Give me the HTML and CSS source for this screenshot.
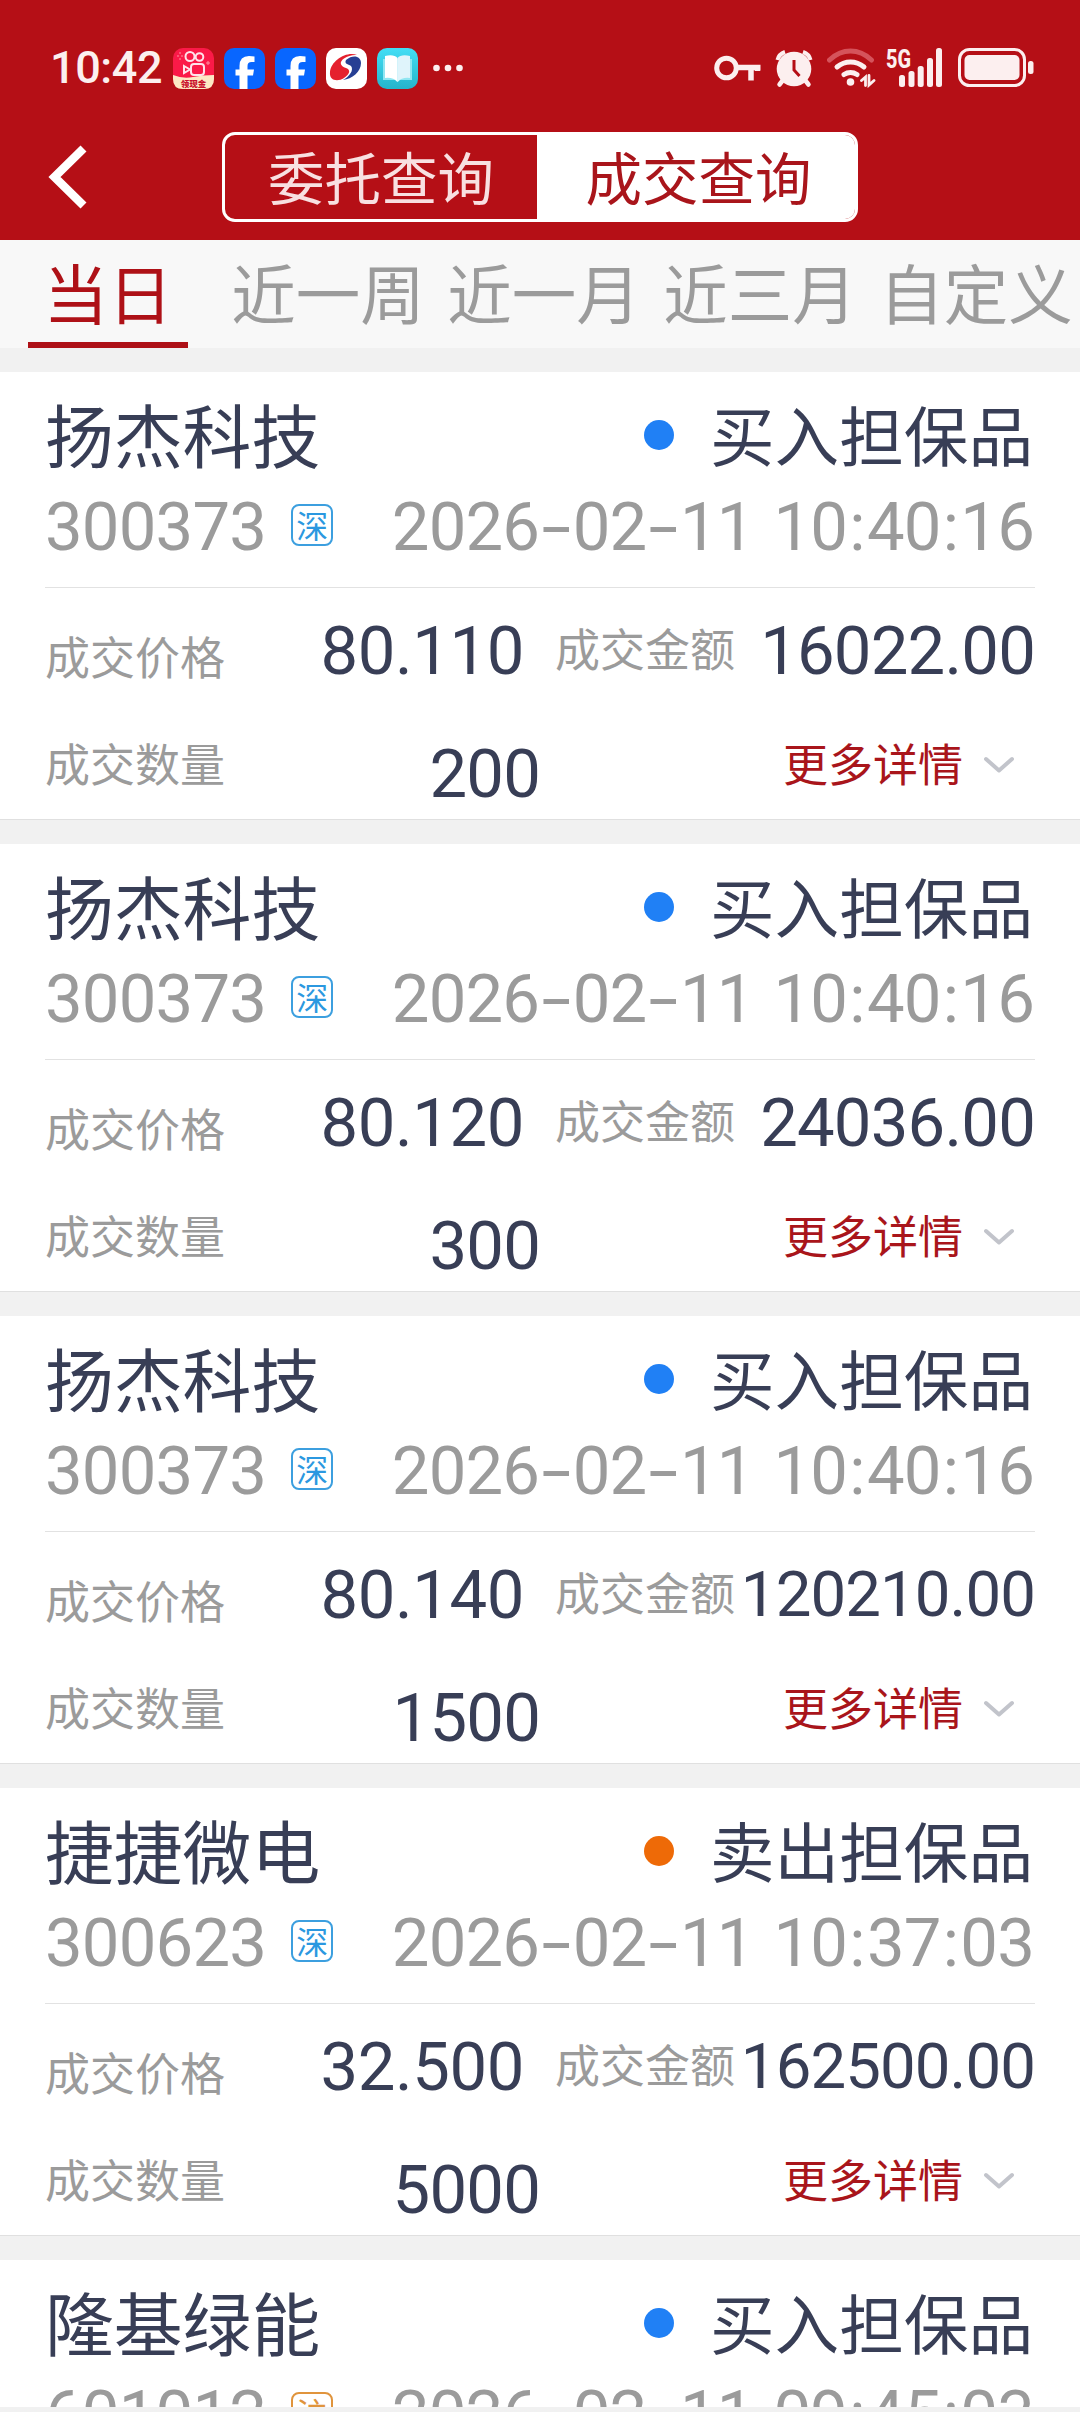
FILE: index.html
```html
<!DOCTYPE html>
<html lang="zh-CN">
<head>
    <meta charset="utf-8">
    <title>成交查询</title>
    <link rel="stylesheet" href="styles.css">
</head>
<body>
    <header class="header">
        <div class="status">
            <span class="clock">10:42</span>
            <div class="apps">
                <svg width="41" height="41" viewBox="0 0 41 41">
                    <rect width="41" height="41" rx="10" fill="#fb1a48"/>
                    <path d="M0 27Q10 31 20 29T41 27V31Q41 41 31 41H10Q0 41 0 31Z" fill="#fde9c4"/>
                    <g fill="none" stroke="#ffe3ea" stroke-width="2">
                        <circle cx="17" cy="8.500" r="4.500"/>
                        <circle cx="26.500" cy="9" r="3.800"/>
                        <rect x="18" y="16" width="13" height="11" rx="3"/>
                        <path d="M11 18L17 21.500L11 25Z"/>
                    </g>
                    <path d="M4 8h2M8 8h2M7 4v2M7 10v2M35 13v4M33 15h4" stroke="#ff8fa0" stroke-width="1"/>
                    <text x="20.500" y="38.500" class="app-tag">领现金</text>
                </svg>
                <svg width="41" height="41" viewBox="0 0 41 41">
                    <rect width="41" height="41" rx="10" fill="#0866ff"/>
                    <path d="M15.500 41V27.500H11.500V21.500H15.500V18Q15.500 8 25 8Q28 8 30.500 8.500V14H27.500Q23.500 14 23.500 18V21.500H30L29 27.500H23.500V41Z" fill="#fff"/>
                </svg>
                <svg width="41" height="41" viewBox="0 0 41 41">
                    <rect width="41" height="41" rx="10" fill="#0866ff"/>
                    <path d="M15.500 41V27.500H11.500V21.500H15.500V18Q15.500 8 25 8Q28 8 30.500 8.500V14H27.500Q23.500 14 23.500 18V21.500H30L29 27.500H23.500V41Z" fill="#fff"/>
                </svg>
                <svg width="41" height="41" viewBox="0 0 41 41">
                    <rect width="41" height="41" rx="10" fill="#fff"/>
                    <path d="M31 7C20 3 5 13 4 24C3 33 12 34 18 30C24 26 25 22 20 20C14 18 13 14 18 10.500C22 8 26 6.500 31 7Z" fill="#e5202e"/>
                    <path d="M20 12C27 6 35 8 35 15C35 24 26 31 17 32C24 28 28 22 25 18C22 16 18 16 20 12Z" fill="#273f94"/>
                </svg>
                <svg width="41" height="41" viewBox="0 0 41 41">
                    <defs>
                        <linearGradient id="teal" x1="0" y1="0" x2="0" y2="1">
                            <stop offset="0" stop-color="#43def5"/>
                            <stop offset="1" stop-color="#25b4cb"/>
                        </linearGradient>
                    </defs>
                    <rect width="41" height="41" rx="10" fill="url(#teal)"/>
                    <path d="M6 11H35V32H23L20.500 34L18 32H6Z" fill="#8fe6f2"/>
                    <path d="M8 8Q17 6 20.500 10V34Q16 29 8 30Z" fill="#fff"/>
                    <path d="M33 8Q24 6 20.500 10V34Q25 29 33 30Z" fill="#dff4fb"/>
                </svg>
            </div>
            <svg class="dots" width="30" height="8" viewBox="0 0 30 8" fill="#fcefef">
                <circle cx="3.500" cy="4" r="3.300"/>
                <circle cx="15" cy="4" r="3.300"/>
                <circle cx="26.500" cy="4" r="3.300"/>
            </svg>
            <div class="signals">
                <svg width="47" height="42" viewBox="0 0 47 42" fill="none" stroke="#fcefef">
                    <circle cx="12.500" cy="22" r="9.800" stroke-width="5"/>
                    <path d="M23 21.500H46.500M37 22V34.500M43.500 22V25" stroke-width="5.500"/>
                </svg>
                <svg class="alarm" width="38" height="42" viewBox="0 0 38 42">
                    <circle cx="19" cy="23" r="17.300" fill="#fcefef"/>
                    <path d="M2.500 14Q4 8 10 6M35.500 14Q34 8 28 6" fill="none" stroke="#fcefef" stroke-width="4"/>
                    <path d="M8 34L4.500 38.500M30 34L33.500 38.500" stroke="#fcefef" stroke-width="4.500" stroke-linecap="round"/>
                    <path d="M19 14V24L24.500 30" fill="none" stroke="#b50f16" stroke-width="3"/>
                </svg>
                <svg class="wifi" width="49" height="42" viewBox="0 0 49 42" fill="none" stroke="#fcefef" stroke-width="5" stroke-linecap="round">
                    <path d="M2.500 14Q12 5 23.500 5T44.500 14" stroke="#d5535b"/>
                    <path d="M10 21Q16 16 23.500 16T37 21"/>
                    <path d="M17 28.500Q20 26.500 23.500 26.500T30 28.500"/>
                    <circle cx="23.500" cy="36" r="3.800" fill="#fcefef" stroke="none"/>
                    <path d="M34.500 34.500L38.500 31V39.500M42 29.500V39L47 34.500" stroke-width="2.800"/>
                </svg>
                <svg class="cell" width="56" height="54" viewBox="0 -12 56 54" fill="#fcefef">
                    <text x="0" y="21.500" class="net" textLength="25" lengthAdjust="spacingAndGlyphs">5G</text>
                    <rect x="13" y="29" width="6" height="12" rx="2.500"/>
                    <rect x="22.500" y="25" width="6" height="16" rx="2.500"/>
                    <rect x="31.700" y="20" width="6" height="21" rx="2.500"/>
                    <rect x="41" y="12" width="6" height="29" rx="2.500"/>
                    <rect x="50" y="2" width="6" height="39" rx="2.500"/>
                </svg>
                <svg class="battery" width="76" height="42" viewBox="0 0 76 42" fill="#fcefef">
                    <rect x="1.500" y="3.500" width="65" height="36" rx="10" fill="none" stroke="#fcefef" stroke-width="3"/>
                    <rect x="6.500" y="9" width="55" height="25" rx="5"/>
                    <rect x="70" y="15" width="5.500" height="13" rx="2.500"/>
                </svg>
            </div>
        </div>
        <div class="nav">
            <svg class="back" width="40" height="64" viewBox="0 0 40 64">
                <path d="M35.500 3.500L6.500 32L35.500 60.500" fill="none" stroke="#fff" stroke-width="8.500"/>
            </svg>
            <div class="switch">
                <div class="switch-item">委托查询</div>
                <div class="switch-item switch-on">成交查询</div>
            </div>
        </div>
    </header>

    <nav class="tabs">
        <div class="tab tab-on"><span>当日</span></div>
        <div class="tab">近一周</div>
        <div class="tab">近一月</div>
        <div class="tab">近三月</div>
        <div class="tab">自定义</div>
    </nav>

    <main class="list">
        <section class="card">
            <div class="row row-name">
                <span class="name">扬杰科技</span>
                <i class="dot"></i>
                <span class="side">买入担保品</span>
            </div>
            <div class="row row-code">
                <span class="num">300373</span>
                <span class="market">深</span>
                <span class="num time">2026<b>-</b>02<b>-</b>11 10<u>:</u>40<u>:</u>16</span>
            </div>
            <div class="row row-price">
                <span class="label">成交价格</span>
                <span class="num price">80.110</span>
                <span class="label label-amount">成交金额</span>
                <span class="num amount">16022.00</span>
            </div>
            <div class="row row-qty">
                <span class="label">成交数量</span>
                <span class="num qty">200</span>
                <span class="more">更多详情</span>
                <svg class="arrow" width="30" height="18" viewBox="0 0 30 18"><path d="M2 3L15 14.500L28 3"/></svg>
            </div>
        </section>

        <section class="card">
            <div class="row row-name">
                <span class="name">扬杰科技</span>
                <i class="dot"></i>
                <span class="side">买入担保品</span>
            </div>
            <div class="row row-code">
                <span class="num">300373</span>
                <span class="market">深</span>
                <span class="num time">2026<b>-</b>02<b>-</b>11 10<u>:</u>40<u>:</u>16</span>
            </div>
            <div class="row row-price">
                <span class="label">成交价格</span>
                <span class="num price">80.120</span>
                <span class="label label-amount">成交金额</span>
                <span class="num amount">24036.00</span>
            </div>
            <div class="row row-qty">
                <span class="label">成交数量</span>
                <span class="num qty">300</span>
                <span class="more">更多详情</span>
                <svg class="arrow" width="30" height="18" viewBox="0 0 30 18"><path d="M2 3L15 14.500L28 3"/></svg>
            </div>
        </section>

        <section class="card">
            <div class="row row-name">
                <span class="name">扬杰科技</span>
                <i class="dot"></i>
                <span class="side">买入担保品</span>
            </div>
            <div class="row row-code">
                <span class="num">300373</span>
                <span class="market">深</span>
                <span class="num time">2026<b>-</b>02<b>-</b>11 10<u>:</u>40<u>:</u>16</span>
            </div>
            <div class="row row-price">
                <span class="label">成交价格</span>
                <span class="num price">80.140</span>
                <span class="label label-amount">成交金额</span>
                <span class="num amount amount-long">120210.00</span>
            </div>
            <div class="row row-qty">
                <span class="label">成交数量</span>
                <span class="num qty">1500</span>
                <span class="more">更多详情</span>
                <svg class="arrow" width="30" height="18" viewBox="0 0 30 18"><path d="M2 3L15 14.500L28 3"/></svg>
            </div>
        </section>

        <section class="card">
            <div class="row row-name">
                <span class="name">捷捷微电</span>
                <i class="dot dot-sell"></i>
                <span class="side">卖出担保品</span>
            </div>
            <div class="row row-code">
                <span class="num">300623</span>
                <span class="market">深</span>
                <span class="num time">2026<b>-</b>02<b>-</b>11 10<u>:</u>37<u>:</u>03</span>
            </div>
            <div class="row row-price">
                <span class="label">成交价格</span>
                <span class="num price">32.500</span>
                <span class="label label-amount">成交金额</span>
                <span class="num amount amount-long">162500.00</span>
            </div>
            <div class="row row-qty">
                <span class="label">成交数量</span>
                <span class="num qty">5000</span>
                <span class="more">更多详情</span>
                <svg class="arrow" width="30" height="18" viewBox="0 0 30 18"><path d="M2 3L15 14.500L28 3"/></svg>
            </div>
        </section>

        <section class="card">
            <div class="row row-name">
                <span class="name">隆基绿能</span>
                <i class="dot"></i>
                <span class="side">买入担保品</span>
            </div>
            <div class="row row-code">
                <span class="num">601012</span>
                <span class="market market-sh">沪</span>
                <span class="num time">2026<b>-</b>02<b>-</b>11 09<u>:</u>45<u>:</u>03</span>
            </div>
        </section>
    </main>
</body>
</html>
```
FILE: styles.css
```css
body {
    margin: 0;
    width: 1080px;
    height: 2412px;
    display: flex;
    flex-direction: column;
    overflow: hidden;
    background: #f1f1f1;
    font-family: "Noto Sans CJK SC", sans-serif;
    color: #383e56;
}

/* header */
.header {
    height: 240px;
    background: #b50f16;
}

.status {
    height: 90px;
    display: flex;
    align-items: flex-end;
    padding-left: 50px;
    padding-right: 46px;
}

.clock {
    width: 123px;
    font: 500 45px/45px Roboto, sans-serif;
    letter-spacing: -0.4px;
    color: #fcefef;
}

.apps {
    display: flex;
    gap: 10px;
    padding-bottom: 1px;
}

.apps svg {
    display: block;
}

.app-tag {
    font: 900 8.5px "Noto Sans CJK SC", sans-serif;
    text-anchor: middle;
    fill: #c9102c;
}

.dots {
    margin-left: 15px;
    margin-bottom: 18px;
}

.signals {
    display: flex;
    align-items: flex-end;
    margin-left: auto;
    margin-bottom: 2px;
}

.alarm {
    margin-left: 14px;
}

.wifi {
    margin-left: 14px;
}

.cell {
    margin-left: 10px;
}

.net {
    font: 800 26px Roboto, sans-serif;
}

.battery {
    margin-left: 16px;
}

.nav {
    height: 90px;
    margin-top: 42px;
    display: flex;
    align-items: center;
    padding-left: 48px;
}

.switch {
    display: flex;
    box-sizing: border-box;
    width: 636px;
    height: 90px;
    margin-left: 134px;
    border: 3px solid #fff;
    border-radius: 13px;
    overflow: hidden;
}

.switch-item {
    width: 312px;
    text-align: center;
    font-size: 56.5px;
    line-height: 80px;
    color: #f8e0e1;
}

.switch-on {
    flex: 1;
    padding-left: 5px;
    background: #fff;
    color: #a9151b;
}

/* date range tabs */
.tabs {
    height: 108px;
    display: flex;
    background: #f8f8f8;
    margin-bottom: 24px;
}

.tab {
    width: 216px;
    padding-left: 8px;
    box-sizing: border-box;
    text-align: center;
    white-space: nowrap;
    font-size: 64.5px;
    line-height: 102px;
    color: #9b9b9b;
}

.tab-on {
    padding: 0 28px;
    color: #ae1117;
}

.tab-on span {
    display: block;
    border-bottom: 6px solid #ae1117;
}

/* deals */
.list {
    height: 2035px;
    overflow: hidden;
}

.card {
    box-sizing: border-box;
    height: 448px;
    margin-bottom: 24px;
    padding: 11px 45px 0;
    background: #fff;
    border-bottom: 1px solid #e0e0e0;
}

.row {
    display: flex;
    align-items: center;
    white-space: nowrap;
}

.row-name {
    height: 100px;
}

.name {
    font-size: 68.8px;
}

.dot {
    width: 30px;
    height: 30px;
    margin-left: auto;
    margin-top: 4px;
    border-radius: 50%;
    background: #2080f5;
}

.dot-sell {
    background: #ee6a07;
}

.side {
    margin-left: 36px;
    margin-right: 2px;
    font-size: 64.6px;
}

.num {
    font: 400 67px/80px Roboto, sans-serif;
    letter-spacing: -0.8px;
}

.row-code {
    height: 88px;
    padding-bottom: 16px;
    border-bottom: 1px solid #e2e2e2;
    color: #9b9b9b;
}

.market {
    box-sizing: border-box;
    width: 42px;
    height: 42px;
    margin-left: 25px;
    margin-bottom: 5px;
    border: 2px solid #3c9fdf;
    border-radius: 8px;
    text-align: center;
    font-size: 32px;
    line-height: 36px;
    color: #2b98e0;
}

.market-sh {
    border-color: #e0943c;
    color: #e0943c;
}

.time {
    margin-left: auto;
    margin-right: 1px;
    word-spacing: 4px;
}

.time b {
    display: inline-block;
    width: 33.5px;
    text-align: center;
    font-weight: 400;
    transform: scaleX(1.6);
}

.time u {
    display: inline-block;
    width: 19.7px;
    text-align: center;
    text-decoration: none;
}

.label {
    font-size: 45px;
    color: #9b9b9b;
}

.row-price {
    height: 126px;
}

.row-price .label {
    padding-top: 8px;
}

.price {
    margin-left: auto;
    padding-right: 1px;
    letter-spacing: -0.4px;
}

.row-price .label-amount {
    width: 180px;
    margin-left: 30px;
    padding: 0 0 8px;
}

.amount {
    width: 300px;
    text-align: right;
}

/* long sums are set smaller so that they still fit beside the label */
.amount-long {
    font-size: 63.5px;
    letter-spacing: -0.9px;
}

.row-qty {
    height: 105px;
}

.row-qty .label {
    width: 180px;
    padding-bottom: 8px;
}

.qty {
    width: 315px;
    padding-top: 15px;
    text-align: right;
}

.more {
    margin-left: 243px;
    padding-bottom: 8px;
    font-size: 45px;
    color: #a9151b;
}

.arrow {
    margin-left: 21px;
    margin-bottom: 4px;
    fill: none;
    stroke: #c2c4cb;
    stroke-width: 4;
    stroke-linecap: round;
    stroke-linejoin: round;
}
```
